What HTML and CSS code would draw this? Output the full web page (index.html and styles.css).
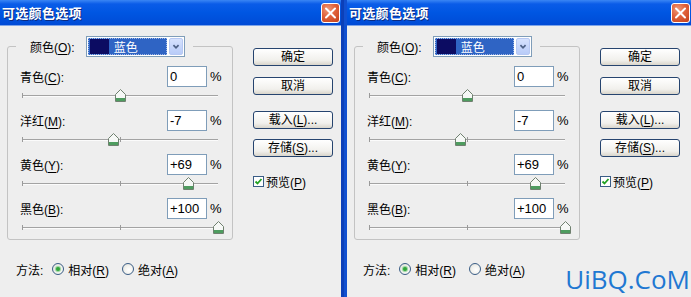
FILE: index.html
```html
<!DOCTYPE html>
<html lang="zh-CN">
<head>
    <meta charset="UTF-8">
    <title>可选颜色选项</title>
    <link rel="stylesheet" href="styles.css">
</head>
<body>
<div class="page">
    <!-- 左侧对话框 -->
    <div class="dialog dialog-left">
        <div class="titlebar">
            <span class="title">可选颜色选项</span>
            <span class="close"><svg width="17" height="18" viewBox="0 0 17 18"><path d="M4 4.5 L13 13.5 M13 4.5 L4 13.5" stroke="#fff" stroke-width="2" stroke-linecap="round"/></svg></span>
        </div>
        <div class="body">
            <div class="main">
                <div class="group">
                    <div class="legend">
                        <span class="lbl">颜色(<u>O</u>):</span>
                        <span class="select">
                            <span class="select-value"><span class="swatch"></span><span class="select-text">蓝色</span></span>
                            <span class="select-arrow"><svg width="14" height="17" viewBox="0 0 14 17"><path d="M4 7 L7 10 L10 7" fill="none" stroke="#4d6185" stroke-width="2"/></svg></span>
                        </span>
                    </div>
                    <div class="rows">
                        <div class="row">
                            <div class="row-line"><span class="lbl">青色(<u>C</u>):</span><span class="field">0</span><span class="pct">%</span></div>
                            <div class="slider"><div class="track"><span class="tick tick-start"></span><span class="tick tick-mid"></span><span class="thumb" style="left: 50%"><svg width="11" height="13" viewBox="0 0 11 13"><polygon points="0.5,5.5 5.5,0.5 10.5,5.5 10.5,12.5 0.5,12.5" fill="#f6f8f6" stroke="#6f806f"/><rect x="1" y="9" width="9" height="3" fill="#4e9c5f"/></svg></span></div></div>
                        </div>
                        <div class="row">
                            <div class="row-line"><span class="lbl">洋红(<u>M</u>):</span><span class="field">-7</span><span class="pct">%</span></div>
                            <div class="slider"><div class="track"><span class="tick tick-start"></span><span class="tick tick-mid"></span><span class="thumb" style="left: 46.5%"><svg width="11" height="13" viewBox="0 0 11 13"><polygon points="0.5,5.5 5.5,0.5 10.5,5.5 10.5,12.5 0.5,12.5" fill="#f6f8f6" stroke="#6f806f"/><rect x="1" y="9" width="9" height="3" fill="#4e9c5f"/></svg></span></div></div>
                        </div>
                        <div class="row">
                            <div class="row-line"><span class="lbl">黄色(<u>Y</u>):</span><span class="field">+69</span><span class="pct">%</span></div>
                            <div class="slider"><div class="track"><span class="tick tick-start"></span><span class="tick tick-mid"></span><span class="thumb" style="left: 84.5%"><svg width="11" height="13" viewBox="0 0 11 13"><polygon points="0.5,5.5 5.5,0.5 10.5,5.5 10.5,12.5 0.5,12.5" fill="#f6f8f6" stroke="#6f806f"/><rect x="1" y="9" width="9" height="3" fill="#4e9c5f"/></svg></span></div></div>
                        </div>
                        <div class="row">
                            <div class="row-line"><span class="lbl">黑色(<u>B</u>):</span><span class="field">+100</span><span class="pct">%</span></div>
                            <div class="slider"><div class="track"><span class="tick tick-start"></span><span class="tick tick-mid"></span><span class="thumb" style="left: 100%"><svg width="11" height="13" viewBox="0 0 11 13"><polygon points="0.5,5.5 5.5,0.5 10.5,5.5 10.5,12.5 0.5,12.5" fill="#f6f8f6" stroke="#6f806f"/><rect x="1" y="9" width="9" height="3" fill="#4e9c5f"/></svg></span></div></div>
                        </div>
                    </div>
                </div>
                <div class="method">
                    <span class="method-label">方法:</span>
                    <span class="radio checked"></span><span class="radio-text">相对(<u>R</u>)</span>
                    <span class="radio"></span><span class="radio-text">绝对(<u>A</u>)</span>
                </div>
            </div>
            <div class="side">
                <div class="btn">确定</div>
                <div class="btn btn-cancel">取消</div>
                <div class="btn btn-load">载入(<u>L</u>)...</div>
                <div class="btn btn-save">存储(<u>S</u>)...</div>
                <div class="preview">
                    <span class="checkbox"><svg width="9" height="9" viewBox="0 0 9 9"><path d="M1.5 4.5 L3.5 6.5 L7.5 2" fill="none" stroke="#21a121" stroke-width="1.8"/></svg></span>
                    <span>预览(<u>P</u>)</span>
                </div>
            </div>
        </div>
    </div>

    <!-- 右侧对话框 -->
    <div class="dialog dialog-right">
        <div class="titlebar">
            <span class="title">可选颜色选项</span>
            <span class="close"><svg width="17" height="18" viewBox="0 0 17 18"><path d="M4 4.5 L13 13.5 M13 4.5 L4 13.5" stroke="#fff" stroke-width="2" stroke-linecap="round"/></svg></span>
        </div>
        <div class="body">
            <div class="main">
                <div class="group">
                    <div class="legend">
                        <span class="lbl">颜色(<u>O</u>):</span>
                        <span class="select">
                            <span class="select-value"><span class="swatch"></span><span class="select-text">蓝色</span></span>
                            <span class="select-arrow"><svg width="14" height="17" viewBox="0 0 14 17"><path d="M4 7 L7 10 L10 7" fill="none" stroke="#4d6185" stroke-width="2"/></svg></span>
                        </span>
                    </div>
                    <div class="rows">
                        <div class="row">
                            <div class="row-line"><span class="lbl">青色(<u>C</u>):</span><span class="field">0</span><span class="pct">%</span></div>
                            <div class="slider"><div class="track"><span class="tick tick-start"></span><span class="tick tick-mid"></span><span class="thumb" style="left: 50%"><svg width="11" height="13" viewBox="0 0 11 13"><polygon points="0.5,5.5 5.5,0.5 10.5,5.5 10.5,12.5 0.5,12.5" fill="#f6f8f6" stroke="#6f806f"/><rect x="1" y="9" width="9" height="3" fill="#4e9c5f"/></svg></span></div></div>
                        </div>
                        <div class="row">
                            <div class="row-line"><span class="lbl">洋红(<u>M</u>):</span><span class="field">-7</span><span class="pct">%</span></div>
                            <div class="slider"><div class="track"><span class="tick tick-start"></span><span class="tick tick-mid"></span><span class="thumb" style="left: 46.5%"><svg width="11" height="13" viewBox="0 0 11 13"><polygon points="0.5,5.5 5.5,0.5 10.5,5.5 10.5,12.5 0.5,12.5" fill="#f6f8f6" stroke="#6f806f"/><rect x="1" y="9" width="9" height="3" fill="#4e9c5f"/></svg></span></div></div>
                        </div>
                        <div class="row">
                            <div class="row-line"><span class="lbl">黄色(<u>Y</u>):</span><span class="field">+69</span><span class="pct">%</span></div>
                            <div class="slider"><div class="track"><span class="tick tick-start"></span><span class="tick tick-mid"></span><span class="thumb" style="left: 84.5%"><svg width="11" height="13" viewBox="0 0 11 13"><polygon points="0.5,5.5 5.5,0.5 10.5,5.5 10.5,12.5 0.5,12.5" fill="#f6f8f6" stroke="#6f806f"/><rect x="1" y="9" width="9" height="3" fill="#4e9c5f"/></svg></span></div></div>
                        </div>
                        <div class="row">
                            <div class="row-line"><span class="lbl">黑色(<u>B</u>):</span><span class="field">+100</span><span class="pct">%</span></div>
                            <div class="slider"><div class="track"><span class="tick tick-start"></span><span class="tick tick-mid"></span><span class="thumb" style="left: 100%"><svg width="11" height="13" viewBox="0 0 11 13"><polygon points="0.5,5.5 5.5,0.5 10.5,5.5 10.5,12.5 0.5,12.5" fill="#f6f8f6" stroke="#6f806f"/><rect x="1" y="9" width="9" height="3" fill="#4e9c5f"/></svg></span></div></div>
                        </div>
                    </div>
                </div>
                <div class="method">
                    <span class="method-label">方法:</span>
                    <span class="radio checked"></span><span class="radio-text">相对(<u>R</u>)</span>
                    <span class="radio"></span><span class="radio-text">绝对(<u>A</u>)</span>
                </div>
            </div>
            <div class="side">
                <div class="btn">确定</div>
                <div class="btn btn-cancel">取消</div>
                <div class="btn btn-load">载入(<u>L</u>)...</div>
                <div class="btn btn-save">存储(<u>S</u>)...</div>
                <div class="preview">
                    <span class="checkbox"><svg width="9" height="9" viewBox="0 0 9 9"><path d="M1.5 4.5 L3.5 6.5 L7.5 2" fill="none" stroke="#21a121" stroke-width="1.8"/></svg></span>
                    <span>预览(<u>P</u>)</span>
                </div>
            </div>
        </div>
    </div>

    <div class="watermark">UiBQ.CoM</div>
</div>
</body>
</html>
```

FILE: styles.css
```css
body {
    margin: 0;
    background-color: #eeeeee;
    font-family: 'Liberation Sans', 'Noto Sans CJK SC', sans-serif;
    font-size: 12px;
    color: #000;
    overflow: hidden;
}
u {
    text-decoration-thickness: 1px;
    text-underline-offset: 2px;
}
.page {
    position: relative;
    display: flex;
    width: 691px;
    height: 297px;
    overflow: hidden;
}
.dialog {
    display: flex;
    flex-direction: column;
    background-color: #eeeeee;
    height: 297px;
}
.dialog-left {
    width: 341px;
    border-right: 3px solid #0c40b8;
}
.dialog-right {
    width: 344px;
    border-left: 3px solid #1150d0;
}

/* 标题栏 */
.titlebar {
    height: 26px;
    flex: none;
    display: flex;
    align-items: center;
    justify-content: space-between;
    padding-left: 2px;
    background: linear-gradient(#3a86f4 0, #0a5ce8 4px, #0056e2 50%, #004bd6 100%);
    border-bottom: 1px solid #7ea4e8;
    box-sizing: border-box;
}
.title {
    color: #fff;
    font-family: 'Noto Sans CJK SC', sans-serif;
    font-weight: bold;
    font-size: 13px;
    letter-spacing: 0.3px;
    text-shadow: 1px 1px 0 #0b2a80;
}
.close {
    width: 19px;
    height: 20px;
    margin-right: 1px;
    box-sizing: border-box;
    border: 1px solid #fff;
    border-radius: 3px;
    background: radial-gradient(circle at 35% 30%, #f09a7a 0, #e0623a 45%, #c3401a 100%);
    display: flex;
    align-items: center;
    justify-content: center;
}

/* 主体 */
.body {
    display: flex;
}
.main {
    width: 233px;
}
.group {
    margin: 20px 0 0 7px;
    width: 226px;
    box-sizing: border-box;
    border: 1px solid #c3c3c3;
    border-radius: 3px;
}
.legend {
    display: flex;
    align-items: center;
    width: fit-content;
    margin: -11px 0 0 8px;
    padding: 0 8px 0 14px;
    background-color: #eeeeee;
}
.legend .lbl {
    margin-right: 11px;
}
.select {
    display: flex;
    align-items: stretch;
    gap: 2px;
    width: 99px;
    height: 21px;
    padding: 1px;
    box-sizing: border-box;
    border: 1px solid #7f9db9;
    background-color: #fff;
}
.select-value {
    display: flex;
    align-items: center;
    width: 79px;
    box-sizing: border-box;
    border: 1px dotted #9fb8e8;
    background-color: #2f64c4;
    padding-left: 1px;
}
.swatch {
    width: 19px;
    height: 15px;
    background-color: #0c0c62;
}
.select-text {
    color: #fff;
    margin-left: 5px;
}
.select-arrow {
    width: 14px;
    border-radius: 2px;
    background: linear-gradient(#d6e2fd, #b8cbf8);
    border: 1px solid #b7c8f3;
    box-sizing: border-box;
    display: flex;
    align-items: center;
    justify-content: center;
}
.rows {
    padding: 9px 9px 5px 12px;
}
.row + .row {
    margin-top: 8px;
}
.row-line {
    display: flex;
    align-items: center;
    height: 21px;
}
.row-line .lbl {
    flex: 1;
}
.field {
    width: 40px;
    height: 21px;
    box-sizing: border-box;
    border: 1px solid #7f9db9;
    background-color: #fff;
    padding-left: 2px;
    font-size: 13px;
    line-height: 19px;
}
.pct {
    width: 13px;
    margin-left: 3px;
    font-size: 13px;
}
.slider {
    height: 14px;
    margin: 1px 5px 0 2px;
}
.track {
    position: relative;
    top: 7px;
    height: 1px;
    background-color: #a3a3a3;
    border-bottom: 1px solid #fbfbfb;
}
.tick {
    position: absolute;
    top: -2px;
    width: 1px;
    height: 5px;
    background-color: #9a9a9a;
}
.tick-start {
    left: 0;
}
.tick-mid {
    left: 50%;
}
.thumb {
    position: absolute;
    top: -6px;
    width: 11px;
    height: 13px;
    margin-left: -5px;
}
.thumb svg {
    display: block;
}

/* 方法 */
.method {
    display: flex;
    align-items: center;
    height: 16px;
    margin: 21px 0 0 16px;
}
.method-label {
    margin-right: 9px;
}
.radio {
    width: 12px;
    height: 12px;
    box-sizing: border-box;
    border: 1px solid #3a5d86;
    border-radius: 50%;
    background: radial-gradient(circle at 60% 60%, #fff 0, #f2f2ee 50%, #d8d8d0 100%);
    display: flex;
    align-items: center;
    justify-content: center;
}
.radio.checked::after {
    content: "";
    width: 4px;
    height: 4px;
    border-radius: 50%;
    background-color: #31a63a;
    box-shadow: 0 0 1px 1px #8fd096;
}
.radio-text {
    margin: 0 13px 0 4px;
}

/* 右侧按钮 */
.side {
    display: flex;
    flex-direction: column;
    width: 80px;
    margin-left: 20px;
    padding-top: 22px;
}
.btn {
    height: 18px;
    box-sizing: border-box;
    border: 1px solid #26446f;
    border-radius: 3px;
    background: linear-gradient(#ffffff, #f1f0ec 70%, #d9d5cb);
    display: flex;
    align-items: center;
    justify-content: center;
    line-height: 1;
}
.btn-cancel {
    margin-top: 11px;
}
.btn-load {
    margin-top: 16px;
}
.btn-save {
    margin-top: 10px;
}
.preview {
    display: flex;
    align-items: center;
    gap: 2px;
    margin-top: 16px;
}
.checkbox {
    width: 11px;
    height: 11px;
    box-sizing: border-box;
    border: 1px solid #3a5d86;
    background-color: #fff;
    display: flex;
    align-items: center;
    justify-content: center;
}

/* 水印 */
.watermark {
    position: absolute;
    right: 1px;
    bottom: 5px;
    font-family: 'Open Sans', sans-serif;
    font-size: 26px;
    line-height: 1;
    color: #1f78d2;
}
```
